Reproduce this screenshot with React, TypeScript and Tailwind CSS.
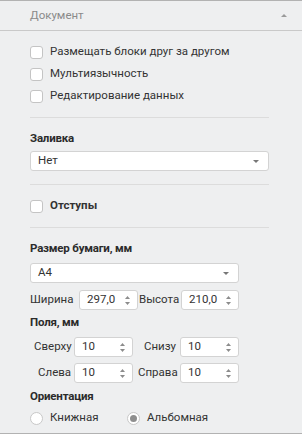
import React from "react";

const Tri = ({ up, className, w = 7, h = 4 }: { up?: boolean; className?: string; w?: number; h?: number }) => (
  <svg width={w} height={h} viewBox={`0 0 ${w} ${h}`} className={className}>
    <path d={up ? `M0 ${h} L${w / 2} 0 L${w} ${h} Z` : `M0 0 L${w} 0 L${w / 2} ${h} Z`} fill="currentColor" />
  </svg>
);

function Checkbox({ label, bold }: { label: string; bold?: boolean }) {
  return (
    <div className="flex items-center h-[22px]">
      <span className="w-[13px] h-[13px] rounded-[3px] border border-[#c4c4c4] bg-white shrink-0" />
      <span className={"ml-[7px] text-[11.5px] text-[#333] " + (bold ? "font-bold" : "")}>{label}</span>
    </div>
  );
}

function Select({ value, width }: { value: string; width: string }) {
  return (
    <div className={"h-[20px] flex items-center justify-between bg-white border border-[#d3d3d3] rounded-[3px] pl-[7px] pr-[9px] " + width}>
      <span className="text-[11.5px] text-[#333]">{value}</span>
      <Tri className="text-[#777]" w={6} h={3} />
    </div>
  );
}

function Spin({ value, width }: { value: string; width: string }) {
  return (
    <div className={"h-[20px] flex items-center justify-between bg-white border border-[#d3d3d3] rounded-[3px] pl-[7px] pr-[7px] " + width}>
      <span className="text-[11.5px] text-[#333]">{value}</span>
      <div className="flex flex-col gap-[3px] text-[#8c8c8c]">
        <Tri up w={5} h={3} />
        <Tri w={5} h={3} />
      </div>
    </div>
  );
}

function Radio({ label, checked }: { label: string; checked?: boolean }) {
  return (
    <div className="flex items-center">
      <span className="w-[13px] h-[13px] rounded-full border border-[#c8c8c8] bg-white flex items-center justify-center shrink-0">
        {checked && <span className="w-[7px] h-[7px] rounded-full bg-[#8e8e8e]" />}
      </span>
      <span className="ml-[7px] text-[11.5px] text-[#333]">{label}</span>
    </div>
  );
}

const Sep = ({ className }: { className: string }) => (
  <div className={"h-px bg-[#dcdcdc] " + className} />
);

const Title = ({ children, className }: { children: React.ReactNode; className: string }) => (
  <div className={"h-[16px] flex items-center text-[11.5px] font-bold text-[#2b2b2b] tracking-[-0.2px] " + className}>{children}</div>
);

export default function App() {
  return (
    <div
      className="w-[302px] h-[434px] bg-[#eeeff0] border-t border-b border-[#b2b2b2] overflow-hidden flex flex-col"
      style={{ fontFamily: 'Roboto, "Noto Sans", sans-serif' }}
    >
      <div className="h-[30px] shrink-0 flex items-center justify-between pl-[30px] pr-[15px] border-b border-[#c9c9c9] bg-[#eeeff0]">
        <span className="text-[11.5px] text-[#8a8a8a]">Документ</span>
        <Tri up className="text-[#9a9a9a]" w={6} h={3} />
      </div>

      <div className="pl-[30px] pr-[33px] flex flex-col">
        <div className="mt-[10px]">
          <Checkbox label="Размещать блоки друг за другом" />
          <Checkbox label="Мультиязычность" />
          <Checkbox label="Редактирование данных" />
        </div>
        <Sep className="mt-[10px]" />

        <Title className="mt-[13px]">Заливка</Title>
        <Select value="Нет" width="w-[239px] mt-[4px]" />
        <Sep className="mt-[13px]" />

        <div className="mt-[10px]">
          <Checkbox label="Отступы" bold />
        </div>
        <Sep className="mt-[10px]" />

        <Title className="mt-[13px]">Размер бумаги, мм</Title>
        <Select value="A4" width="w-[209px] mt-[6px]" />
        <div className="mt-[7px] flex items-center text-[11.5px] text-[#333]">
          <span className="w-[49px]">Ширина</span>
          <Spin value="297,0" width="w-[59px]" />
          <span className="w-[43px] pl-[1px]">Высота</span>
          <Spin value="210,0" width="w-[58px]" />
        </div>

        <Title className="mt-[5px]">Поля, мм</Title>
        <div className="mt-[6px] flex items-center text-[11.5px] text-[#333]">
          <span className="w-[44px] pl-[4px]">Сверху</span>
          <Spin value="10" width="w-[59px]" />
          <span className="w-[47px] pl-[11px]">Снизу</span>
          <Spin value="10" width="w-[59px]" />
        </div>
        <div className="mt-[6px] flex items-center text-[11.5px] text-[#333]">
          <span className="w-[44px] pl-[8px]">Слева</span>
          <Spin value="10" width="w-[59px]" />
          <span className="w-[47px] pl-[5px]">Справа</span>
          <Spin value="10" width="w-[59px]" />
        </div>

        <Title className="mt-[6px]">Ориентация</Title>
        <div className="mt-[5px] h-[16px] flex items-center">
          <div className="w-[97px]">
            <Radio label="Книжная" />
          </div>
          <Radio label="Альбомная" checked />
        </div>
      </div>
    </div>
  );
}
